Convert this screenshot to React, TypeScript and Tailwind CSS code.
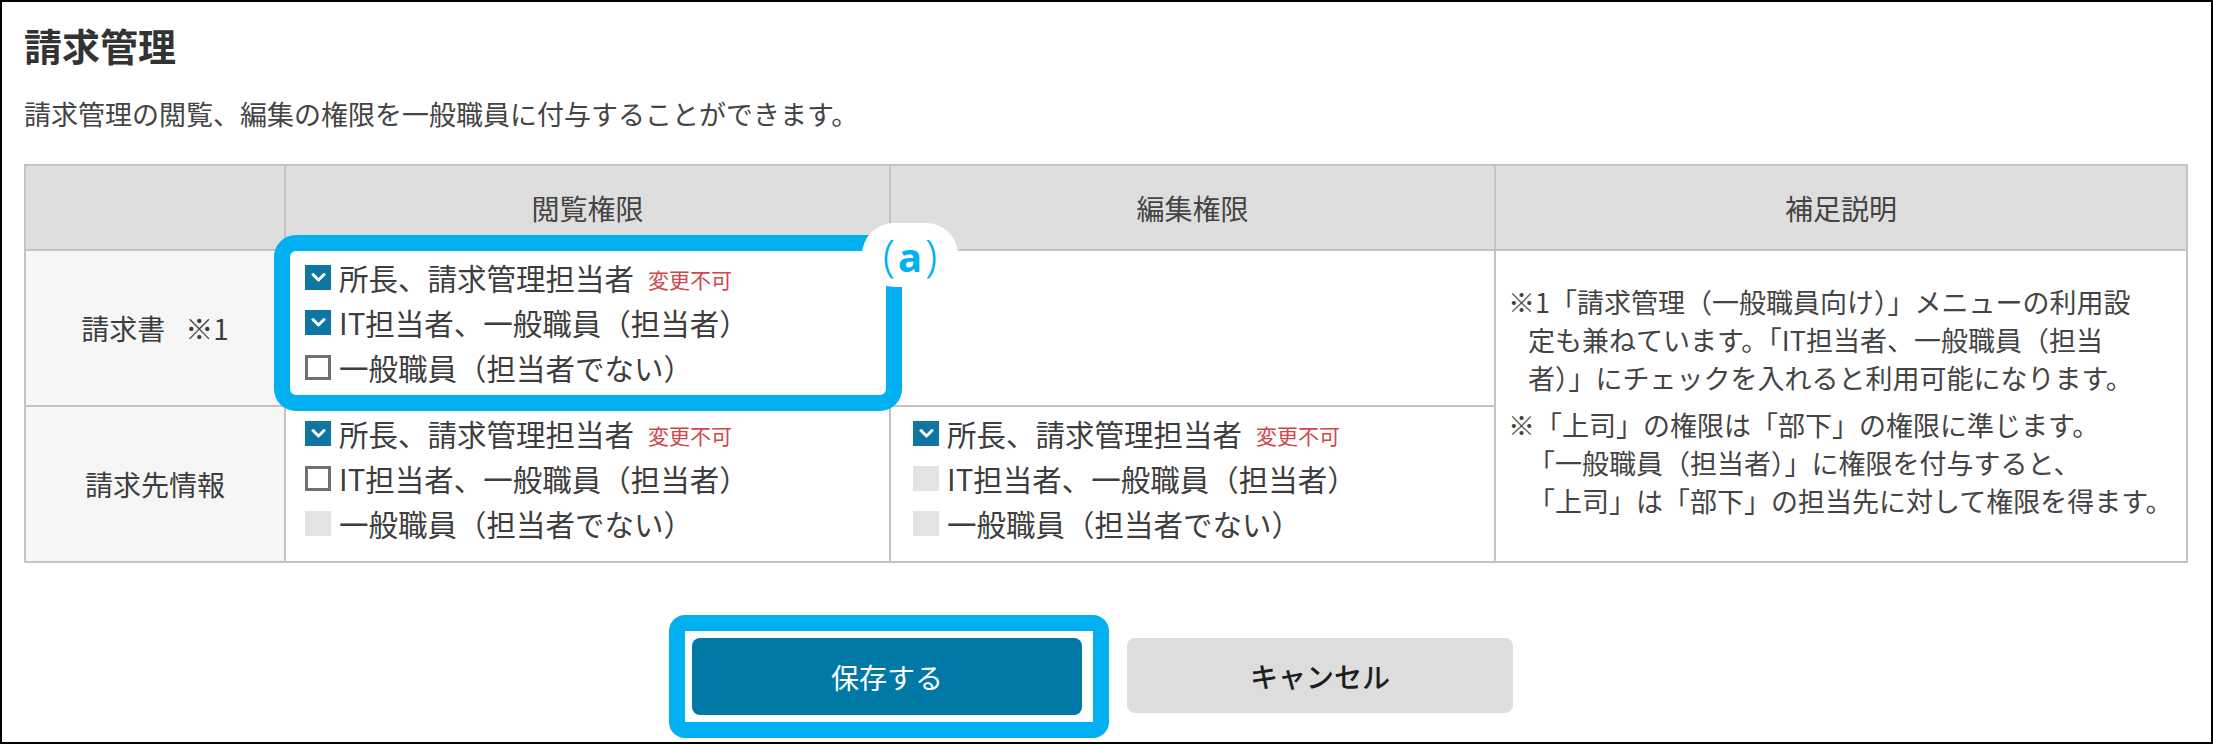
import React from 'react'

type BoxState = 'on' | 'off' | 'disabled'

function CheckBox({ state }: { state: BoxState }) {
  if (state === 'on') {
    return (
      <span className="flex h-[25px] w-[26px] shrink-0 items-center justify-center bg-[#0d76a2]">
        <svg width="15" height="10" viewBox="0 0 15 10">
          <path d="M2 2.5 L7.5 8 L13 2.5" stroke="white" strokeWidth="3" fill="none" strokeLinecap="round" strokeLinejoin="round" />
        </svg>
      </span>
    )
  }
  if (state === 'off') {
    return <span className="h-[25px] w-[26px] shrink-0 border-[3px] border-[#6f6f6f] bg-white" />
  }
  return <span className="h-[25px] w-[26px] shrink-0 bg-[#e3e3e3]" />
}

function Item({ state, label, fixed }: { state: BoxState; label: string; fixed?: boolean }) {
  return (
    <div className="flex h-[45px] items-center whitespace-nowrap">
      <CheckBox state={state} />
      <span className="ml-[8px] text-[29.5px] text-[#3d3d3d]">{label}</span>
      {fixed && <span className="ml-[14px] mt-[6px] text-[21px] text-[#d0474b]">変更不可</span>}
    </div>
  )
}

const cell = 'border-2 border-[#c3c3c3]'

export default function App() {
  return (
    <div className="h-[744px] w-[2213px] overflow-hidden border-2 border-black bg-white pl-[22px] pt-[18px] font-['Noto_Sans_CJK_JP','Noto_Sans',sans-serif] text-[#3d3d3d]">
      <h1 className="text-[38px] font-bold leading-[50px] text-[#333]">請求管理</h1>
      <p className="mt-[24px] text-[27px] leading-[40px] text-[#444]">
        請求管理の閲覧、編集の権限を一般職員に付与することができます。
      </p>

      <table className="mt-[30px] w-[2162px] table-fixed border-collapse">
        <colgroup>
          <col className="w-[260px]" />
          <col className="w-[605px]" />
          <col className="w-[605px]" />
          <col className="w-[692px]" />
        </colgroup>
        <thead>
          <tr className="h-[85px] bg-[#dedede] text-[28px] text-[#444]">
            <th className={cell}></th>
            <th className={`${cell} font-normal`}>閲覧権限</th>
            <th className={`${cell} font-normal`}>編集権限</th>
            <th className={`${cell} font-normal`}>補足説明</th>
          </tr>
        </thead>
        <tbody>
          <tr className="h-[156px]">
            <td className={`${cell} bg-[#f6f6f6] text-center text-[28px]`}>
              請求書<span className="ml-[20px]">※1</span>
            </td>
            <td className={`${cell} relative px-[19px] pb-[12px]`}>
              {/* annotation (a) */}
              <div className="pointer-events-none absolute -bottom-[6px] -left-[12px] -right-[13px] -top-[16px] rounded-[22px] border-[16px] border-[#00b0f0]">
                <div className="absolute -right-[72px] -top-[28px] flex h-[64px] w-[96px] items-center justify-center rounded-full bg-white font-['Noto_Sans',sans-serif] leading-none text-[#00b0f0]">
                  <span className="text-[44px] font-light">(</span>
                  <span className="mx-[3px] mt-[4px] text-[40px] font-bold">a</span>
                  <span className="text-[44px] font-light">)</span>
                </div>
              </div>
              <Item state="on" label="所長、請求管理担当者" fixed />
              <Item state="on" label="IT担当者、一般職員（担当者）" />
              <Item state="off" label="一般職員（担当者でない）" />
            </td>
            <td className={cell}></td>
            <td rowSpan={2} className={`${cell} align-top pl-[12px] pt-[32px] text-[27px] leading-[38px] text-[#444] whitespace-nowrap`}>
              <div>※1「請求管理（一般職員向け）」メニューの利用設</div>
              <div className="pl-[20px]">定も兼ねています。「IT担当者、一般職員（担当</div>
              <div className="pl-[20px]">者）」にチェックを入れると利用可能になります。</div>
              <div className="mt-[9px]">※「上司」の権限は「部下」の権限に準じます。</div>
              <div className="pl-[20px]">「一般職員（担当者）」に権限を付与すると、</div>
              <div className="pl-[20px]">「上司」は「部下」の担当先に対して権限を得ます。</div>
            </td>
          </tr>
          <tr className="h-[156px]">
            <td className={`${cell} bg-[#f6f6f6] text-center text-[28px]`}>請求先情報</td>
            <td className={`${cell} px-[19px] pb-[12px]`}>
              <Item state="on" label="所長、請求管理担当者" fixed />
              <Item state="off" label="IT担当者、一般職員（担当者）" />
              <Item state="disabled" label="一般職員（担当者でない）" />
            </td>
            <td className={`${cell} px-[22px] pb-[12px]`}>
              <Item state="on" label="所長、請求管理担当者" fixed />
              <Item state="disabled" label="IT担当者、一般職員（担当者）" />
              <Item state="disabled" label="一般職員（担当者でない）" />
            </td>
          </tr>
        </tbody>
      </table>

      <div className="mt-[75px] flex justify-center gap-[45px] pr-[30px]">
        <div className="relative">
          <div className="pointer-events-none absolute -bottom-[23px] -left-[23px] -right-[27px] -top-[23px] rounded-[16px] border-[16px] border-[#00b0f0]" />
          <button className="h-[77px] w-[390px] rounded-[8px] bg-[#0079a7] text-[28px] text-white">保存する</button>
        </div>
        <button className="h-[75px] w-[386px] rounded-[8px] bg-[#dddddd] text-[28px] font-medium text-[#1e1e1e]">キャンセル</button>
      </div>
    </div>
  )
}
